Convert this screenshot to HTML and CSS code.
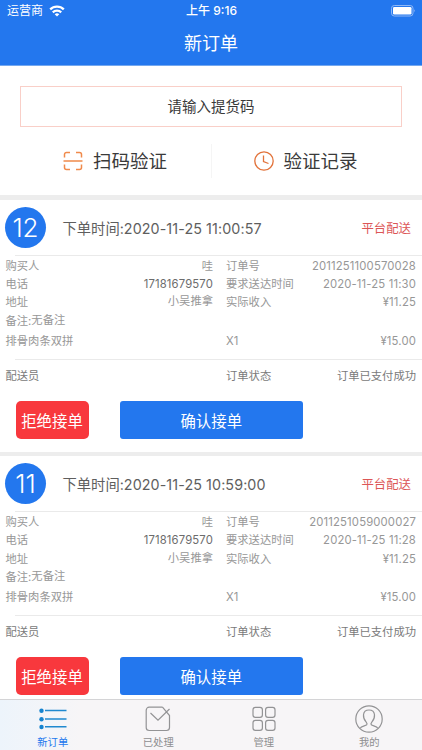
FILE: index.html
```
<!DOCTYPE html>
<html lang="zh-CN">
<head>
    <meta charset="UTF-8">
    <title>新订单</title>
    <link rel="stylesheet" href="styles.css">
</head>
<body>
    <header class="header">
        <div class="status-bar">
            <div class="carrier">
                <span>运营商</span>
                <svg width="16" height="12" viewBox="0 0 16 12" fill="none" stroke="#fff" stroke-width="2.3">
                    <path d="M1.2 4.4a9.7 9.7 0 0 1 13.6 0"/>
                    <path d="M3.8 7.4a6 6 0 0 1 8.4 0"/>
                    <path d="M8 11.6L5.7 9.3a3.3 3.3 0 0 1 4.6 0z" fill="#fff" stroke="none"/>
                </svg>
            </div>
            <div class="clock">上午 9:16</div>
            <svg class="battery" width="25" height="12" viewBox="0 0 25 12">
                <rect x=".5" y=".5" width="21.5" height="10.5" rx="2.8" fill="none" stroke="#8fb8f6"/>
                <rect x="2" y="2" width="18.5" height="7.5" rx="1.3" fill="#fff"/>
                <path d="M23.2 4.2q1.6 1.5 0 3z" fill="#8fb8f6"/>
            </svg>
        </div>
        <h1 class="title">新订单</h1>
    </header>

    <main class="content">
        <section class="verify">
            <div class="code-input">请输入提货码</div>
            <div class="actions">
                <div class="action">
                    <svg width="20" height="20" viewBox="0 0 20 20" fill="none" stroke="#f08a4b" stroke-width="1.5">
                        <path d="M1.5 6.5V3.5a2 2 0 0 1 2-2h3.5M13 1.5h3.5a2 2 0 0 1 2 2v3M18.5 13.5v3a2 2 0 0 1-2 2H13M7 18.5H3.5a2 2 0 0 1-2-2v-3M.5 10h19"/>
                    </svg>
                    <span>扫码验证</span>
                </div>
                <div class="action">
                    <svg width="20" height="20" viewBox="0 0 20 20" fill="none" stroke="#e2733b" stroke-width="1.3">
                        <circle cx="10" cy="10" r="9.2"/>
                        <path d="M9.5 4.5v6l5 2"/>
                    </svg>
                    <span>验证记录</span>
                </div>
            </div>
        </section>

        <section class="order">
            <div class="order-head">
                <div class="badge">12</div>
                <div class="order-time">下单时间:<span class="stamp">2020-11-25 11:00:57</span></div>
                <div class="delivery">平台配送</div>
            </div>
            <div class="info">
                <div class="row">
                    <div class="cell"><span>购买人</span><span>哇</span></div>
                    <div class="cell"><span>订单号</span><span class="num">2011251100570028</span></div>
                </div>
                <div class="row">
                    <div class="cell"><span>电话</span><span class="num phone">17181679570</span></div>
                    <div class="cell"><span>要求送达时间</span><span class="num">2020-11-25 11:30</span></div>
                </div>
                <div class="row">
                    <div class="cell"><span>地址</span><span class="address">小吴推拿</span></div>
                    <div class="cell"><span>实际收入</span><span class="num">¥11.25</span></div>
                </div>
                <div class="row">
                    <div class="cell"><span>备注:<span class="remark">无备注</span></span></div>
                </div>
                <div class="row goods">
                    <div class="cell"><span>排骨肉条双拼</span></div>
                    <div class="cell"><span>X1</span><span class="num">¥15.00</span></div>
                </div>
            </div>
            <div class="row state">
                <div class="cell"><span>配送员</span></div>
                <div class="cell"><span>订单状态</span><span>订单已支付成功</span></div>
            </div>
            <div class="buttons">
                <button class="btn reject">拒绝接单</button>
                <button class="btn confirm">确认接单</button>
            </div>
        </section>

        <section class="order">
            <div class="order-head">
                <div class="badge">11</div>
                <div class="order-time">下单时间:<span class="stamp">2020-11-25 10:59:00</span></div>
                <div class="delivery">平台配送</div>
            </div>
            <div class="info">
                <div class="row">
                    <div class="cell"><span>购买人</span><span>哇</span></div>
                    <div class="cell"><span>订单号</span><span class="num">2011251059000027</span></div>
                </div>
                <div class="row">
                    <div class="cell"><span>电话</span><span class="num phone">17181679570</span></div>
                    <div class="cell"><span>要求送达时间</span><span class="num">2020-11-25 11:28</span></div>
                </div>
                <div class="row">
                    <div class="cell"><span>地址</span><span class="address">小吴推拿</span></div>
                    <div class="cell"><span>实际收入</span><span class="num">¥11.25</span></div>
                </div>
                <div class="row">
                    <div class="cell"><span>备注:<span class="remark">无备注</span></span></div>
                </div>
                <div class="row goods">
                    <div class="cell"><span>排骨肉条双拼</span></div>
                    <div class="cell"><span>X1</span><span class="num">¥15.00</span></div>
                </div>
            </div>
            <div class="row state">
                <div class="cell"><span>配送员</span></div>
                <div class="cell"><span>订单状态</span><span>订单已支付成功</span></div>
            </div>
            <div class="buttons">
                <button class="btn reject">拒绝接单</button>
                <button class="btn confirm">确认接单</button>
            </div>
        </section>
    </main>

    <nav class="tabs">
        <div class="tab active">
            <svg width="28" height="28" viewBox="0 0 28 28" fill="none" stroke="#2089cf" stroke-width="1.4">
                <path d="M6 5.5h21.500M6 14h21.500M6 21.800h21.500"/>
                <g fill="#1583cf" stroke="none">
                    <circle cx="2.5" cy="5.8" r="2.2"/>
                    <circle cx="2.5" cy="14.2" r="2.2"/>
                    <circle cx="2.5" cy="22" r="2.2"/>
                </g>
            </svg>
            <span>新订单</span>
        </div>
        <div class="tab">
            <svg width="28" height="28" viewBox="0 0 28 28" fill="none" stroke="#939395" stroke-width="1.2">
                <path d="M18.500 2.200H5.200a3 3 0 0 0-3 3v17.300a3 3 0 0 0 3 3h17.300a3 3 0 0 0 3-3V10.500l-7-8.300M6.500 8l7.500 7.200L25.500 4"/>
            </svg>
            <span>已处理</span>
        </div>
        <div class="tab">
            <svg width="28" height="28" viewBox="0 0 28 28" fill="none" stroke="#939395" stroke-width="1.2">
                <rect x="3" y="2.4" width="9.4" height="10" rx="2.4"/>
                <rect x="15.6" y="2.4" width="9.4" height="10" rx="2.4"/>
                <rect x="3" y="15.4" width="9.4" height="10" rx="2.4"/>
                <rect x="15.6" y="15.4" width="9.4" height="10" rx="2.4"/>
            </svg>
            <span>管理</span>
        </div>
        <div class="tab">
            <svg width="28" height="28" viewBox="0 0 28 28" fill="none" stroke="#939395" stroke-width="1.2">
                <circle cx="14" cy="14" r="13.2"/>
                <path d="M5.200 23.300c.8-2.400 5-2.300 6.500-3.500.8-.8.3-1.700-.5-2.700C9 14.800 8.300 12.500 8.500 9.800 8.800 6.500 10.800 5 14 5s5.200 1.500 5.500 4.800c.2 2.700-.5 5-2.700 7.300-.8 1-1.300 1.900-.5 2.700 1.500 1.200 5.700 1.100 6.500 3.500"/>
            </svg>
            <span>我的</span>
        </div>
    </nav>
</body>
</html>
```

FILE: styles.css
```
* { box-sizing: border-box; }
body {
    margin: 0;
    width: 422px;
    height: 750px;
    display: flex;
    flex-direction: column;
    overflow: hidden;
    background: #fff;
    font-family: Inter, "Noto Sans CJK SC", sans-serif;
}
svg { display: block; flex: none; }

.header {
    flex: none;
    height: 66px;
    background: #2377ee;
    border-bottom: 1px solid #74a8ef;
    color: #fff;
}
.status-bar {
    height: 22px;
    padding: 0 6px 0 7px;
    display: grid;
    grid-template-columns: 1fr auto 1fr;
    align-items: center;
    font-size: 12px;
    line-height: 22px;
}
.carrier { display: flex; align-items: center; gap: 6px; }
.clock { font-weight: 500; }
.battery { justify-self: end; }
.title {
    margin: 0;
    padding-top: 1px;
    font-size: 18px;
    font-weight: 400;
    line-height: 42px;
    text-align: center;
}

.content {
    flex: 1;
    min-height: 0;
    overflow: hidden;
}
.verify {
    height: 134px;
    padding: 20px 20px 0;
    border-bottom: 5px solid #ededed;
}
.code-input {
    height: 41px;
    border: 1px solid #f9cfc8;
    font-size: 14.5px;
    line-height: 40px;
    text-align: center;
    color: #3a3a3a;
}
.actions {
    display: flex;
    margin: 17px -20px 0;
}
.action {
    width: 50%;
    height: 34px;
    padding-left: 63px;
    display: flex;
    align-items: center;
    gap: 10px;
    font-size: 18.5px;
    line-height: 34px;
    color: #3a3a3a;
}
.action + .action {
    padding-left: 41.5px;
    border-left: 1px solid #f5f5f5;
}

.order {
    height: 256.3px;
    border-bottom: 4.5px solid #ededed;
}
.order-head {
    height: 56px;
    padding: 0 11px 0 5px;
    display: flex;
    align-items: center;
    border-bottom: 1px solid #eaeaea;
    border-image: linear-gradient(to right, transparent 16px, #eaeaea 16px) 1;
}
.badge {
    width: 41px;
    height: 41px;
    border-radius: 50%;
    background: #2377ee;
    color: #fff;
    font-size: 26px;
    font-weight: 300;
    line-height: 41px;
    text-align: center;
}
.order-time {
    margin-left: 16.5px;
    font-size: 14.3px;
    color: #5e5e5e;
}
.stamp { letter-spacing: .1px; }
.delivery {
    margin-left: auto;
    font-size: 12.4px;
    color: #dc5656;
}

.info {
    height: 103.5px;
    padding-top: 1px;
    border-bottom: 1px solid #eaeaea;
    border-image: linear-gradient(to right, transparent 16px, #eaeaea 16px) 1;
}
.row {
    height: 18.2px;
    padding: 0 6px 0 5.5px;
    display: grid;
    grid-template-columns: 207.5px 190px;
    column-gap: 13px;
    font-size: 11.3px;
    line-height: 18.2px;
    color: #979797;
}
.cell {
    display: flex;
    justify-content: space-between;
    white-space: nowrap;
}
.num { letter-spacing: .15px; }
.phone { color: #6c6c6c; }
.address { margin-top: -1px; }
.remark { display: inline-block; vertical-align: 1px; line-height: 16px; }
.goods { margin-top: 2px; }
.state { margin-top: 7px; color: #7a7a7a; }

.buttons {
    display: flex;
    gap: 31px;
    padding: 16px 0 0 15.5px;
}
.btn {
    height: 38px;
    padding: 0;
    border: none;
    border-radius: 5px;
    color: #fff;
    font-family: inherit;
    font-size: 15.4px;
}
.reject { width: 73px; background: #f8383d; }
.confirm { width: 183.5px; border-radius: 3px; background: #2377ee; }

.tabs {
    flex: none;
    height: 51px;
    display: flex;
    border-top: 1px solid #d4d4d6;
    background: linear-gradient(to right, #edf4fb, #f7f5f7 80px);
}
.tab {
    flex: 1;
    padding-top: 5px;
    display: flex;
    flex-direction: column;
    align-items: center;
    font-size: 10.3px;
    line-height: 19px;
    color: #8e8e90;
}
.active { color: #2377ee; }
```
